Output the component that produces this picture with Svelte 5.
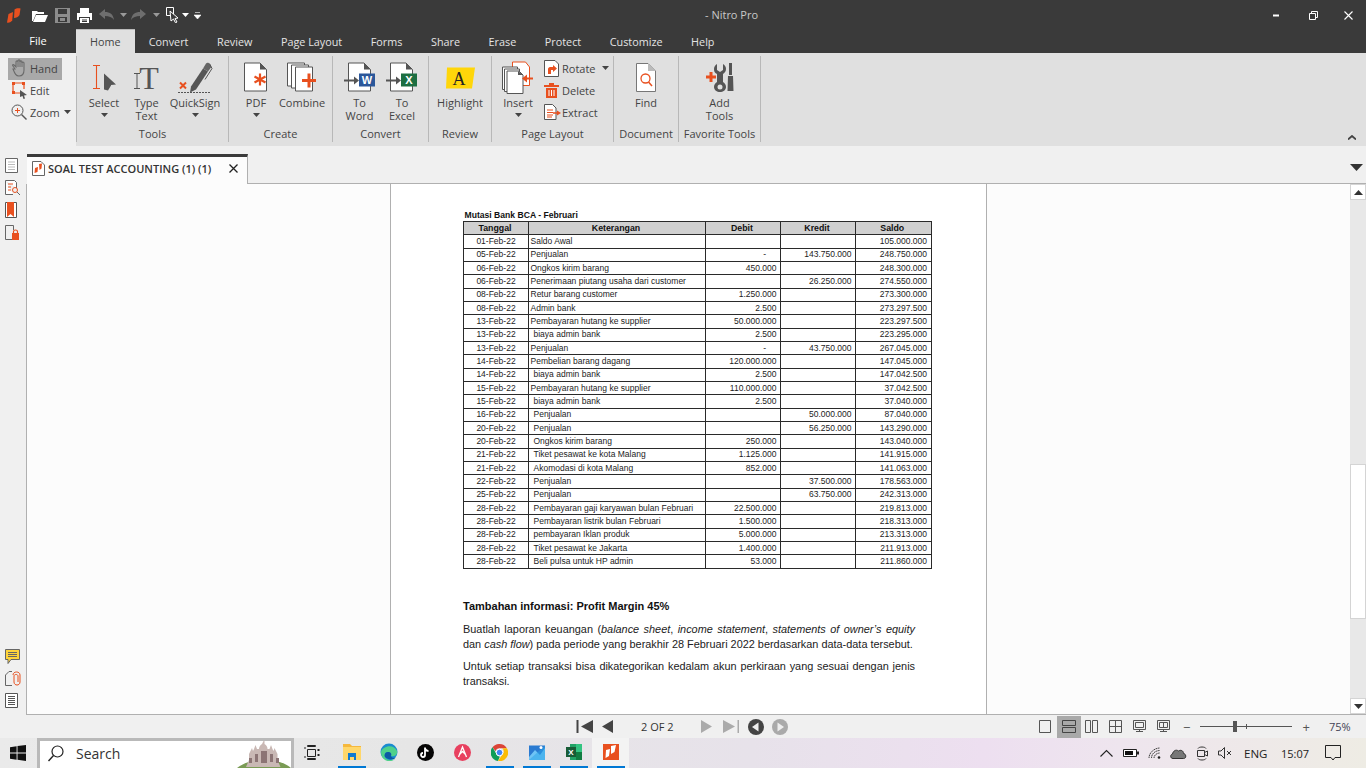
<script>
  const rows = [
    ['01-Feb-22', 'Saldo Awal', '', '', '105.000.000'],
    ['05-Feb-22', 'Penjualan', '-', '143.750.000', '248.750.000'],
    ['06-Feb-22', 'Ongkos kirim barang', '450.000', '', '248.300.000'],
    ['06-Feb-22', 'Penerimaan piutang usaha dari customer', '', '26.250.000', '274.550.000'],
    ['08-Feb-22', 'Retur barang customer', '1.250.000', '', '273.300.000'],
    ['08-Feb-22', 'Admin bank', '2.500', '', '273.297.500'],
    ['13-Feb-22', 'Pembayaran hutang ke supplier', '50.000.000', '', '223.297.500'],
    ['13-Feb-22', 'biaya admin bank', '2.500', '', '223.295.000', true],
    ['13-Feb-22', 'Penjualan', '-', '43.750.000', '267.045.000'],
    ['14-Feb-22', 'Pembelian barang dagang', '120.000.000', '', '147.045.000'],
    ['14-Feb-22', 'biaya admin bank', '2.500', '', '147.042.500', true],
    ['15-Feb-22', 'Pembayaran hutang ke supplier', '110.000.000', '', '37.042.500'],
    ['15-Feb-22', 'biaya admin bank', '2.500', '', '37.040.000', true],
    ['16-Feb-22', 'Penjualan', '', '50.000.000', '87.040.000', true],
    ['20-Feb-22', 'Penjualan', '', '56.250.000', '143.290.000', true],
    ['20-Feb-22', 'Ongkos kirim barang', '250.000', '', '143.040.000', true],
    ['21-Feb-22', 'Tiket pesawat ke kota Malang', '1.125.000', '', '141.915.000', true],
    ['21-Feb-22', 'Akomodasi di kota Malang', '852.000', '', '141.063.000', true],
    ['22-Feb-22', 'Penjualan', '', '37.500.000', '178.563.000', true],
    ['25-Feb-22', 'Penjualan', '', '63.750.000', '242.313.000', true],
    ['28-Feb-22', 'Pembayaran gaji karyawan bulan Februari', '22.500.000', '', '219.813.000', true],
    ['28-Feb-22', 'Pembayaran listrik bulan Februari', '1.500.000', '', '218.313.000', true],
    ['28-Feb-22', 'pembayaran Iklan produk', '5.000.000', '', '213.313.000', true],
    ['28-Feb-22', 'Tiket pesawat ke Jakarta', '1.400.000', '', '211.913.000', true],
    ['28-Feb-22', 'Beli pulsa untuk HP admin', '53.000', '', '211.860.000', true]
  ];
  const tabs = ['Home', 'Convert', 'Review', 'Page Layout', 'Forms', 'Share', 'Erase', 'Protect', 'Customize', 'Help'];
</script>

{#snippet caret(color = '#fff')}
  <svg width="7" height="4" viewBox="0 0 7 4"><path d="M0 0h7L3.5 4z" fill={color} /></svg>
{/snippet}

{#snippet logo()}
  <svg width="14" height="15" viewBox="0 0 14 15"><path d="M7.500 1.500C9 0 12 0 13.500.5L12.500 7C11.500 9 9 10 7 10z" fill="#e8501f" /><path d="M1.500 6L6 4 5.200 12.500C3.500 14.500 1.500 15 0 14.500z" fill="#e8501f" /></svg>
{/snippet}

{#snippet doc(w, h)}
  <path d="M.5.5H{w - 7}L{w - .5} 7V{h - .5}H.5z" fill="#fff" stroke="#555" />
  <path d="M{w - 7} .5V7H{w - .5}z" fill="#555" />
{/snippet}

<div class="app">
  <header class="titlebar">
    <div class="qat">
      {@render logo()}
      <svg width="16" height="13" viewBox="0 0 16 13"><path d="M0 2h5l1 1h6v2H4L1 12H0z" fill="#fff" /><path d="M4 6h12l-3 7H1z" fill="#fff" /></svg>
      <svg width="15" height="15" viewBox="0 0 15 15"><path d="M0 0h15v15H0z" fill="#8c8c8c" /><path d="M3 1h9v5H3z" fill="#3a3a3a" /><path d="M3 9h9v5H3z" fill="#3a3a3a" /><path d="M5 10h5v3H5z" fill="#8c8c8c" /></svg>
      <svg width="15" height="15" viewBox="0 0 15 15"><path d="M3 0h9v5H3z" fill="#fff" /><path d="M0 5h15v7h-2V9H2v3H0z" fill="#fff" /><path d="M3 10h9v5H3z" fill="#fff" /><path d="M5 12h5M5 13.500h5" stroke="#3a3a3a" /></svg>
      <svg width="15" height="12" viewBox="0 0 15 12"><path d="M6 0v3c5 0 8 2 9 8-2-3-5-4-9-4v3L0 5z" fill="#6e6e6e" /></svg>
      {@render caret('#9a9a9a')}
      <svg width="15" height="12" viewBox="0 0 15 12"><path d="M9 0v3C4 3 1 5 0 11c2-3 5-4 9-4v3l6-5z" fill="#6e6e6e" /></svg>
      {@render caret('#9a9a9a')}
      <svg width="13" height="16" viewBox="0 0 13 16"><path d="M.5.5h7v8h-7z" fill="none" stroke="#fff" /><path d="M4 4l8 7-3 .5 2 3.500-1.500.8L7.500 12 5 14z" fill="#3a3a3a" stroke="#fff" /></svg>
      {@render caret()}
      <svg width="7" height="7" viewBox="0 0 7 7"><path d="M1 .5h5M0 3h7L3.500 7z" fill="#fff" stroke="#fff" stroke-width=".6" /></svg>
    </div>
    <div class="doctitle">- Nitro Pro</div>
    <div class="winbtns">
      <svg width="7" height="3" viewBox="0 0 7 3"><path d="M0 .5h6v2H0z" fill="#fff" /></svg>
      <svg width="9" height="9" viewBox="0 0 9 9"><path d="M2.500 2V.5h6v6H7M.5 2.500h6v6h-6z" fill="none" stroke="#fff" /></svg>
      <svg width="9" height="9" viewBox="0 0 9 9"><path d="M.5.5l8 8M8.500.5l-8 8" stroke="#fff" stroke-width="1.100" /></svg>
    </div>
  </header>

  <nav class="tabrow">
    <div class="file">File</div>
    {#each tabs as t, i}
      <div class="tab" class:active={i === 0}>{t}</div>
    {/each}
  </nav>

  <section class="ribbonrow">
    <div class="quick">
      <div class="qitem on">
        <svg width="18" height="18" viewBox="0 0 18 18"><path d="M4 10L2 7c-1-1 0-2 1-1l2 2V3c0-1.500 2-1.500 2 0V2c0-1.500 2-1.500 2 0v1c0-1.500 2-1.500 2 0v1c0-1.300 2-1.300 2 0v7c0 4-2 6-5 6-3 0-4-2-6-7z" fill="none" stroke="#6a6a6a" stroke-width="1.100" /><path d="M7 3v5M9 2v6M11 3v5" stroke="#6a6a6a" /></svg>
        <span>Hand</span>
      </div>
      <div class="qitem">
        <svg width="18" height="18" viewBox="0 0 18 18"><path d="M3 2h9M3 12h6M2 3v9M13 3v5" stroke="#e8501f" stroke-width="1.200" /><path d="M1 1h3v3H1zM11 1h3v3h-3zM1 10h3v3H1z" fill="#e8501f" /><path d="M9 9l7 5-3 .5 1 3-1.500.4-1-2.900L9 16z" fill="#555" /></svg>
        <span>Edit</span>
      </div>
      <div class="qitem">
        <svg width="16" height="16" viewBox="0 0 16 16"><circle cx="6.500" cy="6.500" r="5.500" fill="none" stroke="#555" /><path d="M10.500 10.500l5 5" stroke="#555" stroke-width="1.400" /><path d="M4 6.500h5M6.500 4v5" stroke="#e8501f" /></svg>
        <span class="zoomlabel">Zoom</span>
        <i class="qcaret">{@render caret('#444')}</i>
      </div>
    </div>

    <div class="ribbon">
      <div class="group g-tools">
        <div class="gbody">
          <div class="rbtn w-select">
            <svg width="26" height="28" viewBox="0 0 26 28"><path d="M2 2h7M2 25h7M5.500 2v23" stroke="#e8501f" stroke-width="1.100" fill="none" /><path d="M13 10l12 11-5 .500 0 .500-3 5-4-1z" fill="#555" /></svg>
            <span>Select</span>{@render caret('#444')}
          </div>
          <div class="rbtn w-type">
            <svg width="28" height="28" viewBox="0 0 28 28"><path d="M1 10h6M1 25h6M4 10v15" stroke="#555" fill="none" /><text x="16" y="25" class="bigt">T</text></svg>
            <span>Type<br />Text</span>
          </div>
          <div class="rbtn w-sign">
            <svg width="36" height="32" viewBox="0 0 36 32"><path d="M14 25L26 7l5 3-12 18-6 3z" fill="#555" /><path d="M26 7l3-5c2-2 6 1 5 4l-3 4z" fill="#666" /><path d="M33 3l2 4-7 11" stroke="#555" fill="none" /><path d="M3 21l6 6M9 21l-6 6" stroke="#e8501f" stroke-width="2" /><path d="M1 31h32" stroke="#555" stroke-dasharray="2 1" /></svg>
            <span>QuickSign</span>{@render caret('#444')}
          </div>
        </div>
        <div class="glabel">Tools</div>
      </div>

      <div class="group g-create">
        <div class="gbody">
          <div class="rbtn w-pdf">
            <svg width="24" height="30" viewBox="0 0 24 30">{@render doc(23, 29)}<path d="M16 11v12M10.500 14l11 6M21.500 14l-11 6" stroke="#e8501f" stroke-width="2.200" /></svg>
            <span>PDF</span>{@render caret('#444')}
          </div>
          <div class="rbtn w-combine">
            <svg width="30" height="30" viewBox="0 0 30 30"><path d="M.5.5h17v23H.5z" fill="#fff" stroke="#555" /><path d="M4.500 2.500h17v23h-17z" fill="#fff" stroke="#555" /><path d="M8.500 4.500h17v24h-17z" fill="#fff" stroke="#555" /><path d="M22 11v14M15 18h14" stroke="#e8501f" stroke-width="3" /></svg>
            <span>Combine</span>
          </div>
        </div>
        <div class="glabel">Create</div>
      </div>

      <div class="group g-convert">
        <div class="gbody">
          <div class="rbtn w-word">
            <svg width="32" height="30" viewBox="0 0 32 30"><g transform="translate(4 0)">{@render doc(23, 29)}</g><path d="M0 18h11" stroke="#555" stroke-width="2" /><path d="M10 14l5 4-5 4z" fill="#555" /><rect x="15" y="11" width="16" height="13" fill="#2b579a" /><text x="23" y="21.500" class="badge">W</text></svg>
            <span>To<br />Word</span>
          </div>
          <div class="rbtn w-excel">
            <svg width="32" height="30" viewBox="0 0 32 30"><g transform="translate(4 0)">{@render doc(23, 29)}</g><path d="M0 18h11" stroke="#555" stroke-width="2" /><path d="M10 14l5 4-5 4z" fill="#555" /><rect x="15" y="11" width="16" height="13" fill="#1d6f42" /><text x="23" y="21.500" class="badge">X</text></svg>
            <span>To<br />Excel</span>
          </div>
        </div>
        <div class="glabel">Convert</div>
      </div>

      <div class="group g-review">
        <div class="gbody">
          <div class="rbtn w-high">
            <svg width="30" height="30" viewBox="0 0 30 30"><path d="M2 5h28l-3 21H1z" fill="#ffd60a" /><text x="14" y="22" class="biga">A</text></svg>
            <span>Highlight</span>
          </div>
        </div>
        <div class="glabel">Review</div>
      </div>

      <div class="group g-layout">
        <div class="gbody">
          <div class="rbtn w-insert">
            <svg width="32" height="32" viewBox="0 0 32 32"><path d="M10.500.5h13l4 5V24h-17z" fill="#fff" stroke="#e8501f" /><path d="M.5 5.500h15V28H.5z" fill="#fff" stroke="#555" /><path d="M2.500 7.500h15V30h-15z" fill="#fff" stroke="#555" /><path d="M5 9.500h12l4 4V32H5z" fill="#fff" stroke="#555" /><path d="M16 9.500v4h5z" fill="#555" /><path d="M31 17h-7" stroke="#e8501f" stroke-width="2" /><path d="M25 13l-5 4 5 4z" fill="#e8501f" /></svg>
            <span>Insert</span>{@render caret('#444')}
          </div>
          <div class="smallcol">
            <div class="sitem">
              <svg width="15" height="17" viewBox="0 0 15 17"><path d="M.5.500H11l3.500 3.500V16.500H.5z" fill="#fff" stroke="#555" /><path d="M4 14V9c0-1 1-2 2-2h3V5l4 3.500L9 12v-2H7v4z" fill="#e8501f" /></svg>
              <span>Rotate</span><i class="qcaret">{@render caret('#444')}</i>
            </div>
            <div class="sitem">
              <svg width="15" height="15" viewBox="0 0 15 15"><path d="M0 2h15v2H0zM5 0h5v2H5z" fill="#e8501f" /><path d="M2 5h11v10H2z" fill="#e8501f" /><path d="M5 7v6M7.500 7v6M10 7v6" stroke="#fff" /></svg>
              <span>Delete</span>
            </div>
            <div class="sitem">
              <svg width="17" height="16" viewBox="0 0 17 16"><path d="M.5.500h8l3.500 3.500V15.500H.5z" fill="#fff" stroke="#555" /><path d="M3 6h6M3 8.500h6M3 11h6M3 13h5" stroke="#e8501f" /><path d="M9 9h5" stroke="#e8501f" stroke-width="1.500" /><path d="M13 6.500l4 2.500-4 2.500z" fill="#e8501f" /></svg>
              <span class="extract">Extract</span>
            </div>
          </div>
        </div>
        <div class="glabel">Page Layout</div>
      </div>

      <div class="group g-doc">
        <div class="gbody">
          <div class="rbtn w-find">
            <svg width="20" height="29" viewBox="0 0 20 29"><path d="M.5.500H12l7.500 7.500V28.500H.5z" fill="#fff" stroke="#777" /><path d="M12 .5V8h7.500z" fill="#bbb" /><circle cx="9.500" cy="15.500" r="4.500" fill="none" stroke="#e8501f" stroke-width="1.300" /><path d="M12.500 19l3.500 4" stroke="#e8501f" stroke-width="1.500" /></svg>
            <span>Find</span>
          </div>
        </div>
        <div class="glabel">Document</div>
      </div>

      <div class="group g-fav">
        <div class="gbody">
          <div class="rbtn w-add">
            <svg width="28" height="29" viewBox="0 0 28 29"><path d="M5 9v10M0 14h10" stroke="#e8501f" stroke-width="3" /><path d="M11 1v6l3 2 3-2V1c2 1 3 3 3 5 0 3-2 4-3 5v8c2 1 3 3 3 5 0 3-3 5-6 5s-6-2-6-5c0-2 1-4 3-5v-8c-2-1-3-2-3-5 0-2 1-4 3-5z" fill="#555" /><circle cx="14" cy="24" r="2.500" fill="#e0e0e0" /><path d="M23 0h3v12h-3z" fill="#555" /><path d="M22 13h5l.500 15h-6z" fill="#555" /></svg>
            <span>Add<br />Tools</span>
          </div>
        </div>
        <div class="glabel">Favorite Tools</div>
      </div>

      <svg class="collapse" width="8" height="5" viewBox="0 0 8 5"><path d="M0 4.500L4 1l4 3.500" fill="none" stroke="#444" stroke-width="1.800" /></svg>
    </div>
  </section>

  <section class="docstrip">
    <div class="doctab">
      <svg width="13" height="15" viewBox="0 0 13 15"><path d="M.5.500H9l3.500 3.500v10.500H.5z" fill="#fff" stroke="#666" /><path d="M7 3l3-.5-.5 5-2 1.500zM3 7l3-1-.5 5-3 1z" fill="#e8501f" /></svg>
      <span class="doctabname">SOAL TEST ACCOUNTING (1) (1)</span>
      <svg class="tabx" width="9" height="9" viewBox="0 0 9 9"><path d="M.5.500l8 8M8.500.500l-8 8" stroke="#222" stroke-width="1.300" /></svg>
    </div>
    <div class="stripend">
      <svg width="13" height="7" viewBox="0 0 13 7"><path d="M0 0h13L6.500 7z" fill="#333" /></svg>
    </div>
  </section>

  <main class="workspace">
    <aside class="rail">
      <div class="railgroup">
        <svg width="13" height="15" viewBox="0 0 13 15"><path d="M.5.500h12v14H.5z" fill="#fff" stroke="#666" /><path d="M3 4h7M3 6.500h7M3 9h7M3 11.500h7" stroke="#bbb" /></svg>
        <svg width="15" height="15" viewBox="0 0 15 15"><path d="M.5.500h9l2 2V8M8 14.500H.5V.5" fill="#fff" stroke="#666" /><path d="M3 4h5M3 7h3M3 10h3" stroke="#e8501f" /><circle cx="10" cy="10" r="2.500" fill="none" stroke="#e8501f" /><path d="M12 12l3 3" stroke="#666" /></svg>
        <svg width="12" height="16" viewBox="0 0 12 16"><path d="M.5.500h11v15H.5z" fill="#fff" stroke="#555" /><path d="M2 0h7v15l-3.500-3L2 15z" fill="#e8501f" /></svg>
        <svg width="14" height="15" viewBox="0 0 14 15"><path d="M7 14.500H.5V.5h8V5" fill="none" stroke="#666" /><path d="M7 8h7v7H7z" fill="#e8501f" /><path d="M8.500 8V6.500c0-2 4-2 4 0V8" fill="none" stroke="#e8501f" stroke-width="1.200" /></svg>
      </div>
      <div class="railgroup low">
        <svg width="15" height="15" viewBox="0 0 15 15"><path d="M.5.500h14v10H6l-3 4v-4H.5z" fill="#ffd43a" stroke="#666" /><path d="M3 3.500h9M3 5.500h9M3 7.500h9" stroke="#666" /></svg>
        <svg width="16" height="15" viewBox="0 0 16 15"><path d="M7 14.500H.5V4L4 .5h3" fill="none" stroke="#666" /><path d="M8 4c0-4 7-4 7 0v7c0 4-6 4-6 0V5c0-2 4-2 4 0v6" fill="none" stroke="#e8501f" /></svg>
        <svg width="13" height="15" viewBox="0 0 13 15"><path d="M.5.500h12v14H.5z" fill="#fff" stroke="#555" /><path d="M3 3.500h7M3 5.500h7M3 7.500h7M3 9.500h7M3 11.500h7" stroke="#555" /></svg>
      </div>
    </aside>

    <div class="viewer">
      <article class="page">
        <div class="tabletitle">Mutasi Bank BCA - Februari</div>
        <table>
          <colgroup><col class="c1" /><col class="c2" /><col class="c3" /><col class="c3" /><col class="c5" /></colgroup>
          <thead>
            <tr><th>Tanggal</th><th>Keterangan</th><th>Debit</th><th>Kredit</th><th>Saldo</th></tr>
          </thead>
          <tbody>
            {#each rows as r}
              <tr>
                <td class="ctr">{r[0]}</td>
                <td class:ind={r[5]}>{r[1]}</td>
                <td class="num" class:dash={r[2] === '-'}>{r[2]}</td>
                <td class="num">{r[3]}</td>
                <td class="num">{r[4]}</td>
              </tr>
            {/each}
          </tbody>
        </table>
        <h4>Tambahan informasi: Profit Margin 45%</h4>
        <p>Buatlah laporan keuangan (<em>balance sheet</em>, <em>income statement</em>, <em>statements of owner’s equity</em> dan&nbsp;<em>cash flow</em>) pada periode yang berakhir 28 Februari 2022 berdasarkan data-data tersebut.</p>
        <p>Untuk setiap transaksi bisa dikategorikan kedalam akun perkiraan yang sesuai dengan jenis transaksi.</p>
      </article>
    </div>

    <div class="scrollbar">
      <div class="sbtn"><svg width="9" height="5" viewBox="0 0 9 5"><path d="M0 5h9L4.500 0z" fill="#333" /></svg></div>
      <div class="strack1"></div>
      <div class="sthumb"></div>
      <div class="strack2"></div>
      <div class="sbtn"><svg width="9" height="5" viewBox="0 0 9 5"><path d="M0 0h9L4.500 5z" fill="#333" /></svg></div>
    </div>
  </main>

  <footer class="statusbar">
    <div class="nav">
      <svg width="17" height="13" viewBox="0 0 17 13"><path d="M.5 0h2v13h-2zM17 0v13L5 6.500z" fill="#444" /></svg>
      <svg class="n2" width="11" height="13" viewBox="0 0 11 13"><path d="M11 0v13L0 6.500z" fill="#444" /></svg>
      <span class="pagenum">2 OF 2</span>
      <svg width="11" height="13" viewBox="0 0 11 13"><path d="M0 0v13l11-6.500z" fill="#aaa" /></svg>
      <svg class="n4" width="17" height="13" viewBox="0 0 17 13"><path d="M0 0v13l12-6.500zM14.500 0h1.500v13h-1.500z" fill="#aaa" /></svg>
      <svg class="n5" width="16" height="16" viewBox="0 0 16 16"><circle cx="8" cy="8" r="8" fill="#444" /><path d="M10.500 3.500v9L4 8z" fill="#eee" /></svg>
      <svg class="n5" width="16" height="16" viewBox="0 0 16 16"><circle cx="8" cy="8" r="8" fill="#aaa" /><path d="M5.500 3.500v9L12 8z" fill="#eee" /></svg>
    </div>
    <div class="views">
      <svg width="12" height="13" viewBox="0 0 12 13"><path d="M.5.500h11v12H.5z" fill="none" stroke="#555" /></svg>
      <div class="viewon"><svg width="14" height="13" viewBox="0 0 14 13"><path d="M.5.500h13v5H.5zM.5 7.500h13v5H.5z" fill="none" stroke="#444" /></svg></div>
      <svg width="13" height="13" viewBox="0 0 13 13"><path d="M.5.500h5v12h-5zM7.500.500h5v12h-5z" fill="none" stroke="#555" /></svg>
      <svg width="13" height="13" viewBox="0 0 13 13"><path d="M.5.500h12v12H.5zM6.500.5v12M.5 6.500h12" fill="none" stroke="#555" /></svg>
      <svg width="13" height="13" viewBox="0 0 13 13"><path d="M.5.500h12v9H.5zM2.500 2.500h8v5h-8zM3 11.500h7M6.500 9.500v2" fill="none" stroke="#555" /></svg>
      <svg width="13" height="13" viewBox="0 0 13 13"><path d="M.5.500h12v9H.5zM2.500 2.500h8v5h-8zM6.500 2.500v5M3 11.500h7M6.500 9.500v2" fill="none" stroke="#555" /></svg>
    </div>
    <div class="zoombar">
      <span class="zbtn">−</span>
      <div class="slider"><i class="knob"></i><i class="tick"></i></div>
      <span class="zbtn">+</span>
    </div>
    <div class="pct">75%</div>
  </footer>

  <div class="taskbar">
    <div class="start">
      <svg width="16" height="16" viewBox="0 0 16 16"><path d="M0 2.200l6.600-1V7.500H0zM7.500 1l8.500-1v7.500H7.500zM0 8.500h6.600v6.300L0 13.800zM7.500 8.500H16V16l-8.500-1.200z" fill="#111" /></svg>
    </div>
    <div class="search">
      <svg width="16" height="17" viewBox="0 0 16 17"><circle cx="9.500" cy="6.500" r="5.500" fill="none" stroke="#222" stroke-width="1.200" /><path d="M5.500 10.500L.5 16" stroke="#222" stroke-width="1.400" /></svg>
      <span>Search</span>
      <svg class="church" width="54" height="27" viewBox="0 0 54 27"><path d="M0 27c8-6 16-8 27-8s20 2 27 8z" fill="#7a9b54" /><path d="M26.500 0h1v3c2 1 3 3 3 5h2l1.500-4 1.500 4 1 2 1-3 1.500 3 1.500 3v6l3 7H9l3-7v-6l1.500-3 1.500-3 1 3 1-2 1.500-4 1.500 4h2c0-2 1-4 3-5z" fill="#c9b8b4" /><path d="M24 10h6v12h-6zM18 13h3v8h-3zM33 13h3v8h-3zM12 17h3v5h-3zM39 17h3v5h-3z" fill="#8c7474" /></svg>
    </div>
    <div class="taskicons">
      <div class="ti">
        <svg width="16" height="15" viewBox="0 0 16 15"><path d="M3.500.5h8v1h-8zM3.500 4.500h8v7h-8zM3.500 13.500h8v1h-8z" fill="none" stroke="#222" /><path d="M13.500 4h2v2h-2zM13.500 9h2v2h-2z" fill="#222" /><path d="M0 3h2M0 12h2" stroke="#222" /></svg>
      </div>
      <div class="ti run">
        <svg width="18" height="16" viewBox="0 0 18 16"><path d="M0 0h7l2 2h9v14H0z" fill="#f5b83d" /><path d="M0 3h18v13H0z" fill="#ffd76a" /><path d="M5 9h8v7h-2v-3H7v3H5z" fill="#0f7ad1" /></svg>
      </div>
      <div class="ti">
        <svg width="18" height="18" viewBox="0 0 18 18"><circle cx="9" cy="9" r="8.500" fill="#1a8bd0" /><path d="M1 9c1-6 13-9 16-1 1 4-3 6-6 5 1-3-1-4-3-4-3 0-4 3-3 5 1 3 6 4 10 2-3 3-8 2.500-10 1C2 15 1 12 1 9z" fill="#4fd18b" /><path d="M5 14c-1-2 0-5 3-5 2 0 4 1 3 4 0 2 4 2.500 5 1.500-3 3-8 2-11-.5z" fill="#0c59a4" /></svg>
      </div>
      <div class="ti">
        <svg width="17" height="17" viewBox="0 0 17 17"><circle cx="8.500" cy="8.500" r="8.500" fill="#050505" /><path d="M8 3.500v7.500a2 2 0 1 1-2-2M8 3.500c0 2 1.500 3.500 3.500 3.500" fill="none" stroke="#fff" stroke-width="1.800" /></svg>
      </div>
      <div class="ti">
        <svg width="17" height="17" viewBox="0 0 17 17"><circle cx="8.500" cy="8.500" r="8.500" fill="#e8405f" /><path d="M4.500 13l4-10 4 10M5.500 10.500l3-3 3 3" fill="none" stroke="#fff" stroke-width="1.300" /></svg>
      </div>
      <div class="ti run">
        <svg width="17" height="17" viewBox="0 0 17 17"><path d="M8.500 0a8.500 8.500 0 0 1 7.400 4.300H8.500a4.200 4.200 0 0 0-4 3L1.500 3.300A8.500 8.500 0 0 1 8.500 0z" fill="#db4437" /><path d="M1.500 3.300l3.700 6.200a4 4 0 0 0 3.700 3L7 17A8.500 8.500 0 0 1 1.500 3.300z" fill="#0f9d58" /><path d="M15.900 4.300A8.500 8.500 0 0 1 7 17l4.300-6.500a4 4 0 0 0 0-6.200z" fill="#fbbc05" /><circle cx="8.500" cy="8.500" r="3.300" fill="#4285f4" stroke="#fff" /></svg>
      </div>
      <div class="ti run">
        <svg width="16" height="16" viewBox="0 0 16 16"><path d="M0 1.500h16v14.500H0z" fill="#2a7ad1" /><path d="M0 13l6-7 5 5 5-7v12H0z" fill="#6fc4f5" /><path d="M16 1.500L0 16h16z" fill="#2aa4e8" opacity=".5" /><circle cx="12" cy="3.500" r="1.500" fill="#fff" /></svg>
      </div>
      <div class="ti run">
        <svg width="16" height="16" viewBox="0 0 16 16"><path d="M4 0h12v16H4z" fill="#21a366" /><path d="M10 0h6v8h-6z" fill="#33c481" /><path d="M10 8h6v8h-6z" fill="#107c41" /><rect y="3" width="10" height="10" fill="#185c37" /><text x="5" y="11" class="xl">X</text></svg>
      </div>
      <div class="ti run cur">
        <svg width="16" height="16" viewBox="0 0 16 16"><path d="M0 0h16v16H0z" fill="#e8501f" /><path d="M8 2l5-1-1.500 7L8 10zM3 6l4-1-1 7-3.500 2z" fill="#fff" /></svg>
      </div>
    </div>
    <div class="tray">
      <svg width="13" height="8" viewBox="0 0 13 8"><path d="M.5 7.500l6-6 6 6" fill="none" stroke="#222" stroke-width="1.100" /></svg>
      <svg class="t-bat" width="16" height="8" viewBox="0 0 16 8"><path d="M.5.500h13v7H.5z" fill="#fff" stroke="#222" /><path d="M2 2h8v4H2z" fill="#111" /><path d="M14 2.500h2v3h-2z" fill="#222" /></svg>
      <svg class="t-wifi" width="13" height="12" viewBox="0 0 13 12"><path d="M1 11C1 6 6 1 12 1M3.500 11c0-4 3.500-7.500 8.500-7.500M6 11c0-2.500 2.500-5 6-5" fill="none" stroke="#444" stroke-dasharray="1.500 .5" /><circle cx="11" cy="10.500" r="1.300" fill="#222" /></svg>
      <svg class="t-cloud" width="17" height="11" viewBox="0 0 17 11"><path d="M3 10.500c-3 0-3-4-.5-4.500C3 3 6 1 8.500 3c2-1.500 5-.5 5 2.500 2.500 0 3.500 5 0 5z" fill="#777" stroke="#333" /></svg>
      <svg class="t-cam" width="11" height="17" viewBox="0 0 11 17"><path d="M1 3.500C2 1.500 8 1.500 9 3.500M1 13.500c1 2 7 2 8 0" fill="none" stroke="#333" /><path d="M.5 5.500h7v6h-7zM7.500 7.500l3-1.500v5l-3-1.500" fill="none" stroke="#333" /></svg>
      <svg class="t-vol" width="14" height="12" viewBox="0 0 14 12"><path d="M.5 4h2.500L6.500.5v11L3 8H.5z" fill="none" stroke="#333" /><path d="M9 4l4 4M13 4l-4 4" stroke="#333" /></svg>
      <span class="eng">ENG</span>
      <span class="clock">15:07</span>
      <svg width="16" height="16" viewBox="0 0 16 16"><path d="M.5.500h15v12H10l-2 2.500-2-2.500H.5z" fill="none" stroke="#222" /></svg>
    </div>
  </div>
</div>

<style>
  :global(body) {
    margin: 0;
    background: #f0f0f0;
  }

  .app {
    width: 1366px;
    height: 768px;
    display: flex;
    flex-direction: column;
    overflow: hidden;
    font-family: "Open Sans", "Liberation Sans", sans-serif;
    font-size: 11px;
    color: #444;
  }

  .app svg {
    flex: none;
  }

  i {
    font-style: normal;
    display: inline-flex;
  }

  .titlebar {
    height: 30px;
    flex: none;
    background: #3a3a3a;
    display: flex;
    align-items: center;
  }

  .qat {
    width: 560px;
    display: grid;
    grid-template-columns: 25px 23px 22px 22px 21px 11px 22px 13px 16px 12px 10px;
    align-items: center;
    padding-left: 7px;
    box-sizing: border-box;
  }

  .doctitle {
    width: 700px;
    padding: 0 0 1px 145px;
    box-sizing: border-box;
    color: #c8c8c8;
  }

  .winbtns {
    display: flex;
    align-items: center;
    gap: 29px;
    margin-left: 13px;
  }

  .winbtns svg:last-child {
    margin-left: -3px;
  }

  .tabrow {
    height: 23px;
    flex: none;
    background: #3a3a3a;
    display: flex;
    align-items: flex-end;
    color: #e4e4e4;
  }

  .file {
    width: 76px;
    height: 23px;
    line-height: 21px;
    text-align: center;
    color: #fff;
  }

  .tab {
    height: 23px;
    line-height: 24px;
    padding: 0 14.3px;
    font-size: 10.8px;
  }

  .tab.active {
    background: #e0e0e0;
    color: #444;
    height: 24px;
    border-top: 1px solid #bbb;
    box-sizing: border-box;
    padding: 0 14px;
  }

  .ribbonrow {
    height: 93px;
    flex: none;
    display: flex;
    background: #f0f0f0;
  }

  .quick {
    width: 76px;
    flex: none;
    padding: 5px 0 0 8px;
    box-sizing: border-box;
    display: flex;
    flex-direction: column;
  }

  .qitem {
    width: 54px;
    height: 22px;
    display: flex;
    align-items: center;
    gap: 1px;
    padding: 0 0 2px 3px;
    box-sizing: border-box;
  }

  .qitem.on {
    background: #a9a9a9;
  }

  .zoomlabel {
    margin-left: 2px;
  }

  .qcaret {
    margin-left: 3px;
  }

  .ribbon {
    flex: 1;
    display: flex;
    background: #e0e0e0;
    position: relative;
  }

  .collapse {
    position: absolute;
    right: 10px;
    bottom: 6px;
  }

  .group {
    height: 86px;
    margin-top: 3px;
    border-left: 1px solid #b8b8b8;
    display: flex;
    flex-direction: column;
    box-sizing: border-box;
    flex: none;
  }

  .g-fav {
    border-right: 1px solid #b8b8b8;
  }

  .g-tools { width: 152px; }
  .g-create { width: 104px; }
  .g-convert { width: 96px; }
  .g-review { width: 63px; }
  .g-layout { width: 122px; }
  .g-doc { width: 65px; }
  .g-fav { width: 83px; }

  .gbody {
    flex: none;
    height: 69px;
    display: flex;
  }

  .glabel {
    height: 17px;
    text-align: center;
    line-height: 18px;
    white-space: nowrap;
  }

  .rbtn {
    flex: none;
    display: flex;
    flex-direction: column;
    align-items: center;
    text-align: center;
    line-height: 13px;
    padding-top: 3px;
    box-sizing: border-box;
  }

  .rbtn svg:first-child {
    height: 37px;
  }

  .rbtn span + svg {
    margin-top: 4px;
  }

  .w-select { width: 54px; }
  .w-type { width: 31px; }
  .w-sign { width: 66px; }
  .w-pdf { width: 54px; }
  .w-combine { width: 38px; }
  .w-word { width: 53px; }
  .w-excel { width: 32px; }
  .w-high { width: 62px; }
  .w-insert { width: 52px; }
  .w-find { width: 64px; }
  .w-add { width: 81px; }

  .smallcol {
    display: flex;
    flex-direction: column;
    padding-top: 1px;
  }

  .sitem {
    height: 22px;
    display: flex;
    align-items: center;
    gap: 3px;
    white-space: nowrap;
  }

  .extract {
    margin-left: -2px;
  }

  .docstrip {
    height: 38px;
    flex: none;
    display: flex;
    align-items: flex-end;
    padding: 0 0 0 27px;
    background: #f0f0f0;
  }

  .doctab {
    width: 221px;
    height: 30px;
    background: #fcfcfc;
    border-top: 3px solid #3a3a3a;
    border-right: 1px solid #b0b0b0;
    display: flex;
    align-items: center;
    box-sizing: border-box;
    padding: 0 9px 5px 5px;
  }

  .doctabname {
    font-weight: 600;
    margin-left: 3px;
    color: #333;
    white-space: nowrap;
  }

  .tabx {
    margin-left: auto;
  }

  .stripend {
    flex: 1;
    height: 29px;
    border-bottom: 1px solid #b0b0b0;
    box-sizing: border-box;
    display: flex;
    justify-content: flex-end;
    padding: 9px 3px 0 0;
  }

  .workspace {
    height: 531px;
    flex: none;
    display: flex;
  }

  .rail {
    width: 26px;
    flex: none;
    background: #f0f0f0;
    border-right: 1px solid #b0b0b0;
    display: flex;
    flex-direction: column;
    justify-content: space-between;
    align-items: flex-start;
  }

  .railgroup {
    display: flex;
    flex-direction: column;
    gap: 7px;
    padding-left: 5px;
    margin-top: -26px;
  }

  .railgroup.low {
    margin: 0 0 7px;
  }

  .viewer {
    flex: 1;
    background: #fcfcfc;
    border-bottom: 1px solid #b0b0b0;
    display: flex;
    justify-content: center;
    overflow: hidden;
  }

  .page {
    width: 597px;
    background: #fff;
    border-left: 1px solid #b0b0b0;
    border-right: 1px solid #b0b0b0;
    box-sizing: border-box;
    padding: 26px 0 0 72px;
    font-family: "Liberation Sans", Arial, sans-serif;
    color: #1c1c1c;
  }

  .tabletitle {
    font-size: 8.6px;
    font-weight: 700;
    line-height: 10px;
    height: 11px;
    padding-left: 1.5px;
    color: #111;
  }

  table {
    width: 467.5px;
    table-layout: fixed;
    border-collapse: collapse;
    font-size: 8.5px;
    border: 1.4px solid #2a2a2a;
  }

  .c1 { width: 65px; }
  .c2 { width: 177px; }
  .c3 { width: 75px; }
  .c5 { width: 75.5px; }

  th, td {
    height: 13.33px;
    padding: 0 3.5px 0 1.5px;
    box-sizing: border-box;
    border: 1px solid #2a2a2a;
    line-height: 11px;
    white-space: nowrap;
    overflow: hidden;
  }

  th {
    background: #d0d0d0;
    font-size: 8.8px;
    font-weight: 700;
    text-align: center;
    color: #111;
  }

  td.ctr {
    text-align: center;
    padding-left: 3.5px;
  }

  td.num {
    text-align: right;
  }

  td.dash {
    padding-right: 14px;
  }

  td.ind {
    padding-left: 4.5px;
  }

  h4 {
    margin: 30px 0 0;
    font-size: 11px;
    font-weight: 700;
    line-height: 14px;
    color: #111;
  }

  p {
    width: 452px;
    margin: 7.5px 0 0;
    font-size: 10.9px;
    line-height: 15px;
    text-align: justify;
    color: #222;
  }

  h4 + p {
    margin-top: 9px;
  }

  .scrollbar {
    width: 16px;
    flex: none;
    background: #e8e8e8;
    border-bottom: 1px solid #b0b0b0;
    display: flex;
    flex-direction: column;
    box-sizing: border-box;
  }

  .sbtn {
    height: 16px;
    background: #fff;
    border: 1px solid #d4d4d4;
    box-sizing: border-box;
    display: flex;
    align-items: center;
    justify-content: center;
    flex: none;
  }

  .strack1 {
    height: 264px;
    flex: none;
  }

  .sthumb {
    height: 155px;
    flex: none;
    background: #fff;
    border: 1px solid #d4d4d4;
    box-sizing: border-box;
  }

  .strack2 {
    flex: 1;
  }

  .statusbar {
    height: 23px;
    flex: none;
    background: #f0f0f0;
    display: flex;
    align-items: center;
  }

  .nav {
    display: flex;
    align-items: center;
    width: 800px;
    padding-left: 576px;
    box-sizing: border-box;
    flex: none;
  }

  .n2 { margin-left: 9px; }
  .pagenum { width: 88px; padding-left: 28px; box-sizing: border-box; color: #333; white-space: nowrap; }
  .n4 { margin-left: 11px; }
  .n5 { margin-left: 8px; }

  .views {
    display: flex;
    align-items: center;
    gap: 11px;
    margin-left: 239px;
    width: 135px;
    flex: none;
  }

  .viewon {
    width: 24px;
    height: 22px;
    margin: 0 -7px 0 -5px;
    background: #a9a9a9;
    display: flex;
    align-items: center;
    justify-content: center;
  }

  .zoombar {
    display: flex;
    align-items: center;
    gap: 10px;
    margin-left: 9px;
    flex: none;
  }

  .zbtn {
    font-size: 13px;
    color: #555;
  }

  .slider {
    width: 92px;
    height: 1px;
    background: #555;
    position: relative;
  }

  .knob {
    position: absolute;
    left: 33px;
    top: -5px;
    width: 4px;
    height: 11px;
    background: #555;
  }

  .tick {
    position: absolute;
    left: 46px;
    top: -2px;
    width: 1px;
    height: 5px;
    background: #555;
  }

  .pct {
    margin-left: 19px;
    color: #445;
    white-space: nowrap;
  }

  .taskbar {
    height: 30px;
    flex: none;
    display: flex;
    align-items: center;
    background: linear-gradient(90deg, #eaeaea 0%, #e6e6e6 30%, #e7e2ea 55%, #eddff0 72%, #eee5ee 82%, #eeece4 100%);
  }

  .start {
    width: 37px;
    height: 30px;
    flex: none;
    display: flex;
    align-items: center;
    justify-content: center;
    padding-right: 1px;
    box-sizing: border-box;
  }

  .search {
    width: 257px;
    height: 30px;
    flex: none;
    background: #fff;
    border: 3px solid #b9b9b9;
    border-bottom: 0;
    box-sizing: border-box;
    display: flex;
    align-items: center;
    padding: 0 0 3px 8px;
    gap: 12px;
    position: relative;
    font-size: 14px;
    color: #333;
  }

  .church {
    position: absolute;
    right: 0;
    bottom: 0;
  }

  .taskicons {
    display: flex;
    flex: none;
  }

  .ti {
    width: 37px;
    height: 30px;
    display: flex;
    align-items: center;
    justify-content: center;
    box-sizing: border-box;
    padding-bottom: 2px;
  }

  .ti:first-child {
    width: 39px;
    justify-content: flex-start;
    padding-left: 10px;
  }

  .ti.run {
    background: linear-gradient(#0000 93%, #0078d4 93%, #0078d4 100%) no-repeat center / 28px 100%;
  }

  .ti.cur {
    background-color: #f3f3f3;
  }

  .tray {
    flex: 1;
    display: flex;
    align-items: center;
    padding-left: 471px;
    color: #222;
  }

  .t-bat { margin-left: 10px; }
  .t-wifi { margin-left: 9px; }
  .t-cloud { margin-left: 9px; }
  .t-cam { margin-left: 10px; }
  .t-vol { margin-left: 10px; }

  .eng {
    margin-left: 12px;
    font-size: 11.5px;
    width: 37px;
  }

  .clock {
    font-size: 11px;
    width: 44px;
  }

  .bigt {
    font-family: "Liberation Serif", serif;
    font-size: 32px;
    fill: #555;
    text-anchor: middle;
  }

  .biga {
    font-family: "Liberation Serif", serif;
    font-size: 18px;
    fill: #222;
    text-anchor: middle;
  }

  .badge {
    font-family: "Liberation Sans", sans-serif;
    font-weight: 700;
    font-size: 11px;
    fill: #fff;
    text-anchor: middle;
  }

  .xl {
    font-family: "Liberation Sans", sans-serif;
    font-weight: 700;
    font-size: 8px;
    fill: #fff;
    text-anchor: middle;
  }
</style>
